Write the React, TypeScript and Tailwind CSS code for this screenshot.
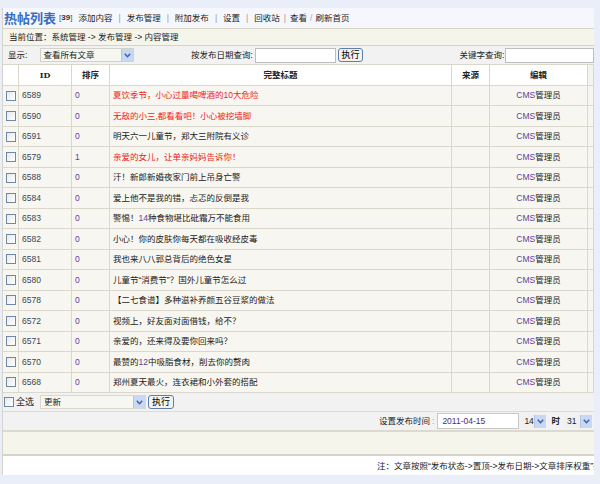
import React from "react";

type Row = { id: string; s: string; t: React.ReactNode; red?: boolean };

const P = ({ children }: { children: React.ReactNode }) => (
  <span className="text-[#5a3fa0]">{children}</span>
);

const rows: Row[] = [
  { id: "6589", s: "0", t: "夏饮季节，小心过量喝啤酒的10大危险", red: true },
  { id: "6590", s: "0", t: "无敌的小三,都看看吧！小心被挖墙脚", red: true },
  { id: "6591", s: "0", t: "明天六一儿童节，郑大三附院有义诊" },
  { id: "6579", s: "1", t: "亲爱的女儿，让单亲妈妈告诉你！", red: true },
  { id: "6588", s: "0", t: "汗！新郎新婚夜家门前上吊身亡警" },
  { id: "6584", s: "0", t: "爱上他不是我的错，忐忑的反倒是我" },
  { id: "6583", s: "0", t: <>警惕！<P>14</P>种食物堪比砒霜万不能食用</> },
  { id: "6582", s: "0", t: "小心！你的皮肤你每天都在吸收经皮毒" },
  { id: "6581", s: "0", t: "我也来八八郭总背后的绝色女星" },
  { id: "6580", s: "0", t: "儿童节“消费节”？国外儿童节怎么过" },
  { id: "6578", s: "0", t: "【二七食谱】多种滋补养颜五谷豆浆的做法" },
  { id: "6572", s: "0", t: "视频上，好友面对面借钱，给不？" },
  { id: "6571", s: "0", t: "亲爱的，还来得及要你回来吗？" },
  { id: "6570", s: "0", t: <>最赞的<P>12</P>中吸脂食材，削去你的赘肉</> },
  { id: "6568", s: "0", t: "郑州夏天最火，连衣裙和小外套的搭配" },
];

const Arrow = () => (
  <span className="flex items-center justify-center w-[12px] h-full bg-[#c8d7f2] border-l border-[#b4c6e6]">
    <svg width="7" height="5" viewBox="0 0 7 5">
      <path d="M0.8 0.8 L3.5 3.8 L6.2 0.8" fill="none" stroke="#3d5fa8" strokeWidth="1.4" />
    </svg>
  </span>
);

const Check = () => (
  <span className="block w-[10px] h-[10px] border border-[#7088a4] bg-gradient-to-br from-[#e6e9ee] to-white" />
);

const Btn = ({ className = "" }: { className?: string }) => (
  <span
    className={`flex items-center justify-center h-[14px] w-[26px] rounded-[3px] border border-[#5d7fa8] bg-[#f2f2f0] text-[9px] text-black ${className}`}
  >
    执行
  </span>
);

const cell = "border-r border-b border-[#dad8cc] flex items-center";

export default function App() {
  return (
    <div className="w-[600px] h-[484px] overflow-hidden bg-[#e9eef8] pt-[8px] pl-[2px] font-['Liberation_Sans','Noto_Sans_CJK_SC',sans-serif] text-[8.5px] leading-none text-[#222]">
      <div className="w-[592px] h-[467px] flex flex-col overflow-hidden border-l border-[#d4d4cc] bg-white">
        {/* title bar */}
        <div className="h-[20px] shrink-0 flex items-center bg-[#f5f7fc] pl-[1px] whitespace-nowrap">
          <span className="text-[13px] font-bold text-[#3a6cbf]">热帖列表</span>
          <span className="ml-[3px] text-[8px] text-[#555]">
            [<b className="text-[#333]">39</b>]
          </span>
          <span className="ml-[6px]">添加内容</span>
          <span className="px-[6px] text-[#999]">|</span>
          <span>发布管理</span>
          <span className="px-[6px] text-[#999]">|</span>
          <span>附加发布</span>
          <span className="px-[6px] text-[#999]">|</span>
          <span>设置</span>
          <span className="px-[6px] text-[#999]">|</span>
          <span>回收站</span>
          <span className="px-[4px] text-[#999]">|</span>
          <span>查看</span>
          <span className="px-[3px] text-[#aaa]">/</span>
          <span>刷新首页</span>
        </div>
        {/* breadcrumb */}
        <div className="h-[18px] shrink-0 flex items-center bg-[#f6f5ec] border-t border-b border-[#d6d3c4] pl-[6px]">
          当前位置：系统管理 -&gt; 发布管理 -&gt; 内容管理
        </div>
        {/* filter row */}
        <div className="h-[18px] shrink-0 flex items-center bg-[#f2f2f2] whitespace-nowrap">
          <span className="ml-[5px] w-[32px]">显示:</span>
          <span className="flex items-center h-[14px] w-[96px] border border-[#d2d2cc] bg-[#f7f7f2]">
            <span className="flex-1 pl-[3px]">查看所有文章</span>
            <Arrow />
          </span>
          <span className="ml-[57px]">按发布日期查询:</span>
          <span className="ml-[2px] h-[15px] w-[82px] border border-[#bdbdbd] bg-white" />
          <Btn className="ml-[2px]" />
          <span className="ml-[96px]">关键字查询:</span>
          <span className="ml-[1px] h-[15px] w-[90px] border border-[#bdbdbd] bg-white" />
        </div>
        {/* table */}
        <div className="grid shrink-0 grid-cols-[16px_53px_38px_342px_38px_98px_6px] border-t border-[#dad8cc]">
          <div className={`${cell} h-[21px] bg-white`} />
          <div className={`${cell} h-[21px] bg-white justify-center font-bold font-['DejaVu_Serif',serif] text-[8px]`}>ID</div>
          <div className={`${cell} h-[21px] bg-white justify-center font-bold`}>排序</div>
          <div className={`${cell} h-[21px] bg-white justify-center font-bold`}>完整标题</div>
          <div className={`${cell} h-[21px] bg-white justify-center font-bold`}>来源</div>
          <div className={`${cell} h-[21px] bg-white justify-center font-bold`}>编辑</div>
          <div className={`${cell} h-[21px] bg-[#f3f3ef]`} />
          {rows.map((r) => (
            <React.Fragment key={r.id}>
              <div className={`${cell} h-[20.47px] bg-[#f7f6f0] justify-center`}>
                <Check />
              </div>
              <div className={`${cell} h-[20.47px] bg-[#f7f6f0] pl-[3px] text-[#3a4656]`}>{r.id}</div>
              <div className={`${cell} h-[20.47px] bg-[#f7f6f0] pl-[3px] text-[#6a3aa0]`}>{r.s}</div>
              <div className={`${cell} h-[20.47px] bg-[#f7f6f0] pl-[3px] whitespace-nowrap ${r.red ? "text-[#ee1c1c]" : "text-[#1a1a1a]"}`}>
                {r.t}
              </div>
              <div className={`${cell} h-[20.47px] bg-[#f7f6f0]`} />
              <div className={`${cell} h-[20.47px] bg-[#f7f6f0] justify-center`}>
                <span className="text-[#5d3f98]">CMS</span>
                <span>管理员</span>
              </div>
              <div className={`${cell} h-[20.47px] bg-[#f7f6f0]`} />
            </React.Fragment>
          ))}
        </div>
        {/* select all row */}
        <div className="h-[19px] shrink-0 flex items-center bg-[#f2f2f2] border-b border-[#dcdcd4] whitespace-nowrap">
          <span className="ml-[1px]">
            <Check />
          </span>
          <span className="ml-[2px] text-[9px]">全选</span>
          <span className="ml-[6px] flex items-center h-[14px] w-[106px] border border-[#d8d8d0] bg-[#f7f7f2]">
            <span className="flex-1 pl-[3px]">更新</span>
            <Arrow />
          </span>
          <Btn className="ml-[2px]" />
        </div>
        {/* publish time row */}
        <div className="h-[20px] shrink-0 flex items-center bg-[#f2f2f2] border-b-2 border-[#dcdad0] whitespace-nowrap">
          <span className="ml-[376px]">设置发布时间</span>
          <span className="ml-[2px] text-[#999]">:</span>
          <span className="ml-[3px] flex items-center h-[16px] w-[82px] border border-[#c8c8c8] bg-white pl-[4px] text-[#4a2f7a]">
            2011-04-15
          </span>
          <span className="ml-[3px] flex items-center h-[13px] w-[24px] bg-[#f0f0ee]">
            <span className="flex-1 pl-[2px]">14</span>
            <Arrow />
          </span>
          <span className="ml-[5px] font-bold">时</span>
          <span className="ml-[4px] flex items-center h-[13px] w-[28px] bg-[#f0f0ee]">
            <span className="flex-1 pl-[3px]">31</span>
            <Arrow />
          </span>
        </div>
        {/* empty cream row */}
        <div className="h-[24px] shrink-0 bg-[#f6f5ec] border-b-2 border-[#d6d4ca]" />
        {/* note row */}
        <div className="h-[20px] shrink-0 flex items-center bg-white whitespace-nowrap overflow-hidden">
          <span className="ml-[374px]">注：文章按照“发布状态-&gt;置顶-&gt;发布日期-&gt;文章排序权重”排序</span>
        </div>
      </div>
    </div>
  );
}
